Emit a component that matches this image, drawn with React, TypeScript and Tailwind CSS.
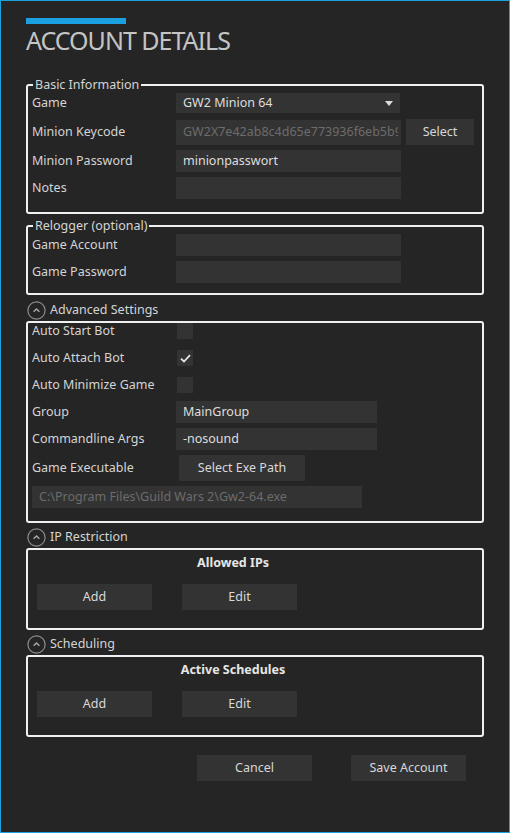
import type { ReactNode } from "react"

const label = "text-[12.5px] leading-[16px] text-[#d4d4d4]"
const box = "rounded-[3px] border-2 border-[#f0f0f0]"
const input = "flex items-center bg-[#333333] px-[7px] text-[12.5px]"
const button = "flex items-center justify-center bg-[#333333] text-[12.5px] text-[#d8d8d8]"

function Row({ title, children, className = "" }: { title: string; children?: ReactNode; className?: string }) {
  return (
    <div className={`flex items-center ${className}`}>
      <div className={`w-[144px] ${label}`}>{title}</div>
      {children}
    </div>
  )
}

function Check({ checked }: { checked?: boolean }) {
  return (
    <div className="ml-[1px] flex h-[16px] w-[16px] items-center justify-center bg-[#333333]">
      {checked && (
        <svg width="11" height="9" viewBox="0 0 11 9">
          <path d="M1 4.6 L4 7.5 L10 1.2" fill="none" stroke="#e6e6e6" strokeWidth="1.8" />
        </svg>
      )}
    </div>
  )
}

function SectionHeader({ title, className = "" }: { title: string; className?: string }) {
  return (
    <div className={`flex h-[20px] items-center pl-[1px] ${className}`}>
      <svg width="19" height="19" viewBox="0 0 19 19">
        <circle cx="9.5" cy="9.5" r="8.6" fill="none" stroke="#8e8e8e" strokeWidth="1.2" />
        <path d="M6.6 10.8 L9.5 7.9 L12.4 10.8" fill="none" stroke="#a8a8a8" strokeWidth="1.4" />
      </svg>
      <span className={`ml-[4px] ${label}`}>{title}</span>
    </div>
  )
}

function ListBox({ heading }: { heading: string }) {
  return (
    <div className={`${box} mt-[1px] px-[9px] pt-[5px] pb-[18px]`}>
      <div className="w-[392px] text-center text-[12.5px] font-bold leading-[16px] text-[#e6e6e6]">{heading}</div>
      <div className="mt-[13px] flex gap-[30px]">
        <div className={`${button} h-[26px] w-[115px]`}>Add</div>
        <div className={`${button} h-[26px] w-[115px]`}>Edit</div>
      </div>
    </div>
  )
}

export default function App() {
  return (
    <div className="h-[833px] w-[510px] border border-[#1ba1e2] bg-[#252525] px-[25px] font-['Noto_Sans',sans-serif]">
      <div className="mt-[17px] h-[6px] w-[100px] bg-[#1ba1e2]" />
      <h1 className="mt-[4px] text-[25px] leading-[25px] tracking-[-1px] text-[#c4c4c4]">ACCOUNT DETAILS</h1>

      <fieldset className={`${box} mt-[24px] px-[4px] pb-[13px]`}>
        <legend className={`ml-[1px] px-[2px] ${label}`}>Basic Information</legend>
        <Row title="Game">
          <div className={`${input} h-[20px] w-[224px] justify-between text-[#dedede]`}>
            <span>GW2 Minion 64</span>
            <svg width="8" height="5" viewBox="0 0 8 5">
              <path d="M0 0 H8 L4 5 Z" fill="#dcdcdc" />
            </svg>
          </div>
        </Row>
        <Row title="Minion Keycode" className="mt-[6px]">
          <div className={`${input} h-[25px] w-[225px] pr-[3px] text-[#6c6c6c]`}>
            <div className="overflow-hidden whitespace-nowrap">GW2X7e42ab8c4d65e773936f6eb5b9c1</div>
          </div>
          <div className={`${button} ml-[5px] h-[26px] w-[68px]`}>Select</div>
        </Row>
        <Row title="Minion Password" className="mt-[5px]">
          <div className={`${input} h-[22px] w-[225px] text-[#dedede]`}>minionpasswort</div>
        </Row>
        <Row title="Notes" className="mt-[5px]">
          <div className={`${input} h-[22px] w-[225px]`} />
        </Row>
      </fieldset>

      <fieldset className={`${box} mt-[4px] px-[4px] pb-[10px]`}>
        <legend className={`ml-[1px] px-[2px] ${label}`}>Relogger (optional)</legend>
        <Row title="Game Account">
          <div className={`${input} h-[22px] w-[225px]`} />
        </Row>
        <Row title="Game Password" className="mt-[5px]">
          <div className={`${input} h-[22px] w-[225px]`} />
        </Row>
      </fieldset>

      <SectionHeader title="Advanced Settings" className="mt-[5px]" />
      <div className={`${box} mt-[1px] px-[4px] pb-[13px]`}>
        <Row title="Auto Start Bot">
          <Check />
        </Row>
        <Row title="Auto Attach Bot" className="mt-[11px]">
          <Check checked />
        </Row>
        <Row title="Auto Minimize Game" className="mt-[11px]">
          <Check />
        </Row>
        <Row title="Group" className="mt-[8px]">
          <div className={`${input} h-[22px] w-[201px] text-[#dedede]`}>MainGroup</div>
        </Row>
        <Row title="Commandline Args" className="mt-[5px]">
          <div className={`${input} h-[22px] w-[201px] text-[#dedede]`}>-nosound</div>
        </Row>
        <Row title="Game Executable" className="mt-[5px]">
          <div className={`${button} ml-[3px] h-[26px] w-[126px]`}>Select Exe Path</div>
        </Row>
        <div className={`${input} mt-[5px] h-[22px] w-[330px] text-[#6c6c6c]`}>C:\Program Files\Guild Wars 2\Gw2-64.exe</div>
      </div>

      <SectionHeader title="IP Restriction" className="mt-[4px]" />
      <ListBox heading="Allowed IPs" />

      <SectionHeader title="Scheduling" className="mt-[4px]" />
      <ListBox heading="Active Schedules" />

      <div className="mt-[18px] flex gap-[39px] pl-[171px]">
        <div className={`${button} h-[26px] w-[115px]`}>Cancel</div>
        <div className={`${button} h-[26px] w-[115px]`}>Save Account</div>
      </div>
    </div>
  )
}
